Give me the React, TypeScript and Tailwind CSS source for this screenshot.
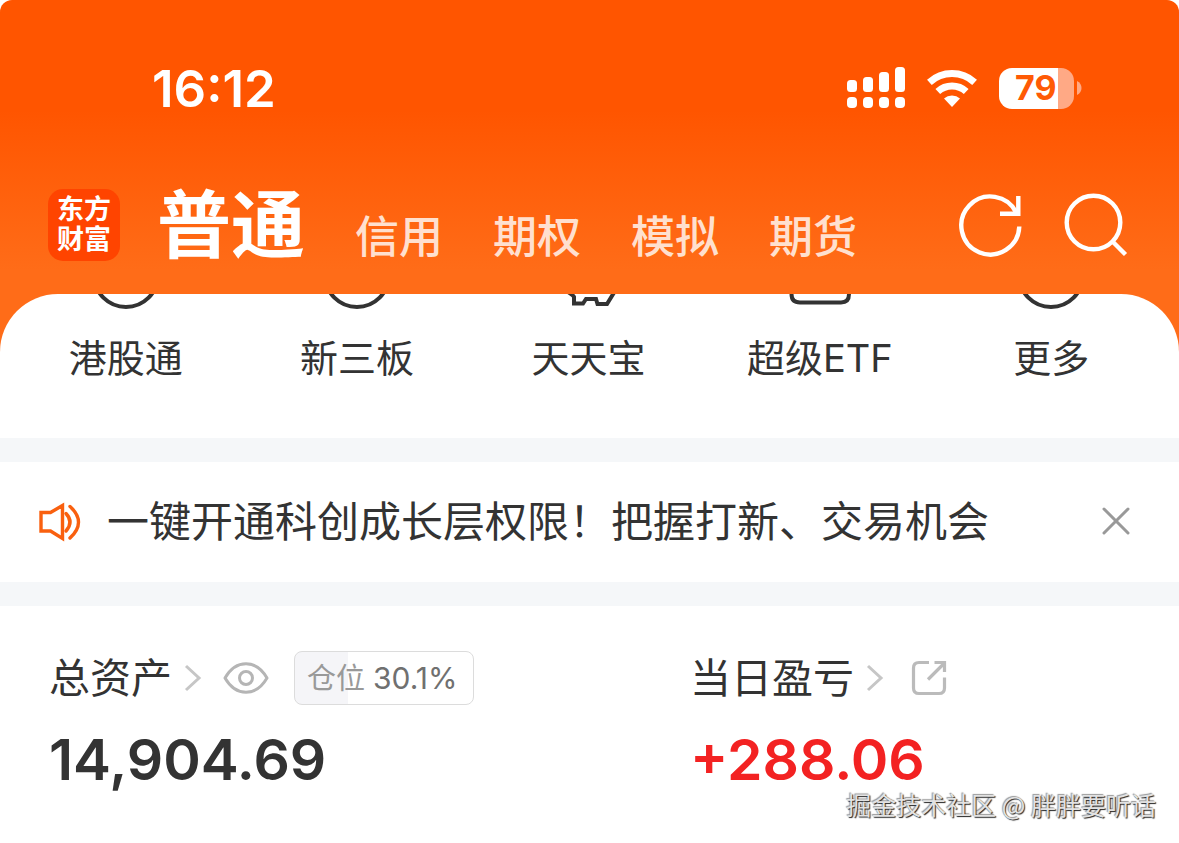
import React from "react";

const cjk = "font-['Inter','Noto_Sans_CJK_SC',sans-serif]";

const accounts = ["信用", "期权", "模拟", "期货"];

function SignalIcon() {
  const tops = [13, 10, 5, 0];
  const heights = [12, 15, 20, 25];
  return (
    <svg width="58" height="42" viewBox="0 0 58 42" fill="#fff" aria-hidden="true">
      {tops.map((top, i) => (
        <g key={top}>
          <rect x={i * 16} y={top} width="10" height={heights[i]} rx="3.5" />
          <rect x={i * 16} y="30" width="10" height="11" rx="4" />
        </g>
      ))}
    </svg>
  );
}

function WifiIcon() {
  return (
    <svg width="52" height="40" viewBox="0 0 52 40" fill="none" stroke="#fff" strokeWidth="7" aria-hidden="true">
      <path d="M3.4 14.3 A33.5 33.5 0 0 1 48.6 14.3" />
      <path d="M11.8 23.5 A21 21 0 0 1 40.2 23.5" />
      <path d="M26 39 L18 30.5 A12 12 0 0 1 34 30.5 Z" fill="#fff" stroke="none" />
    </svg>
  );
}

function Battery() {
  return (
    <div className="flex items-center gap-[3px]">
      <div className="flex h-[41px] w-[75px] items-center overflow-hidden rounded-[13px] bg-[linear-gradient(90deg,#fff_59px,#ffa985_59px)] pl-4 text-[34px] leading-none font-bold text-[#ff5a05]">
        79
      </div>
      <svg width="5" height="14" viewBox="0 0 5 14" fill="#ffa985" aria-hidden="true">
        <path d="M0 0 C6 3 6 11 0 14 Z" />
      </svg>
    </div>
  );
}

function RefreshIcon() {
  return (
    <svg width="64" height="64" viewBox="0 0 64 64" fill="none" stroke="#fff" strokeWidth="4.4" aria-hidden="true">
      <path d="M60.3 33.5 A29 29 0 1 1 57.5 20" />
      <path d="M41 20.800 H59.300 V3" />
    </svg>
  );
}

function SearchIcon() {
  return (
    <svg width="64" height="64" viewBox="0 0 64 64" fill="none" stroke="#fff" strokeWidth="4.4" aria-hidden="true">
      <circle cx="29.5" cy="29.5" r="26.8" />
      <path d="M48.5 48.5 L61.5 61.5" />
    </svg>
  );
}

const shortcuts = [
  { label: "港股通", shape: <circle cx="40" cy="-19" r="32" /> },
  { label: "新三板", shape: <circle cx="40" cy="-19" r="32" /> },
  { label: "天天宝", shape: <path d="M20 -2 Q25 1 26 3 V9.500 H35 L38 5 H48 L49.500 10 H59 L67 -3" /> },
  { label: "超级ETF", shape: <path d="M11.500 -8 V0 Q11.500 8.500 20 8.500 H61 Q69 8.500 69 0 V-8" /> },
  { label: "更多", shape: <circle cx="40" cy="-19" r="32" /> },
];

function Chevron() {
  return (
    <svg width="18" height="28" viewBox="0 0 18 28" fill="none" stroke="#c6c6c6" strokeWidth="3" aria-hidden="true">
      <path d="M2 2 L15 14 L2 26" />
    </svg>
  );
}

export default function App() {
  return (
    <main className={`relative min-h-screen bg-white text-[#333] ${cjk}`}>
      <div className="rounded-t-[12px] bg-[linear-gradient(180deg,#ff5500_0px,#ff5500_110px,#ff6c18_270px)]">
        <header className="h-[294px] pt-[60px] text-white">
          <div className="flex h-14 items-center justify-between pr-[97px] pl-[152px]">
            <span className="text-[51px] leading-none font-semibold">16:12</span>
            <div className="flex items-center gap-[21px]">
              <SignalIcon />
              <WifiIcon />
              <Battery />
            </div>
          </div>
          <div className="mt-[67px] flex items-center justify-between pr-[51px] pl-12">
            <div className="flex items-center">
              <a
                href="#home"
                className="flex size-[72px] flex-col items-center justify-center rounded-[15px] bg-[#ff4400] text-[27px] leading-[30px] font-bold"
              >
                <span>东方</span>
                <span>财富</span>
              </a>
              <nav className="ml-[37px] flex items-end gap-[50px]">
                <a href="#normal" aria-current="page" className="text-[74px] leading-[84px] font-bold">
                  普通
                </a>
                {accounts.map((name) => (
                  <a key={name} href={`#${name}`} className="text-[44px] leading-[60px] font-medium text-[#ffe0cf]">
                    {name}
                  </a>
                ))}
              </nav>
            </div>
            <div className="flex items-center gap-[41px]">
              <button type="button" aria-label="刷新">
                <RefreshIcon />
              </button>
              <button type="button" aria-label="搜索">
                <SearchIcon />
              </button>
            </div>
          </div>
        </header>

        <nav className="grid h-36 grid-cols-5 overflow-hidden rounded-t-[58px] bg-white pr-3 pl-[10px]">
          {shortcuts.map(({ label, shape }) => (
            <a key={label} href={`#${label}`} className="flex flex-col items-center gap-6 text-[38px] leading-[48px]">
              <svg width="80" height="16" viewBox="0 0 80 16" fill="none" stroke="#333" strokeWidth="4" aria-hidden="true">
                {shape}
              </svg>
              {label}
            </a>
          ))}
        </nav>
      </div>

      <div className="h-6 bg-[#f5f7f9]" />

      <section className="flex h-[120px] items-center pr-[48px] pl-[38px]">
        <svg width="44" height="40" viewBox="0 0 44 40" fill="none" stroke="#f9600f" strokeWidth="3.4" aria-hidden="true">
          <path d="M3 10.500 H12.500 L24.500 3.500 V36.500 L12.500 29 H3 Z" />
          <path d="M28 11.500 Q36 20 28 29" strokeLinecap="round" />
          <path d="M32 4.500 Q49 20 32 36" strokeLinecap="round" />
        </svg>
        <p className="ml-[25px] flex-1 text-[42px] leading-[56px] whitespace-nowrap">
          一键开通科创成长层权限！把握打新、交易机会
        </p>
        <button type="button" aria-label="关闭">
          <svg width="30" height="30" viewBox="0 0 30 30" fill="none" stroke="#999" strokeWidth="3" strokeLinecap="round" aria-hidden="true">
            <path d="M3 2 L27 26 M27 2 L3 26" />
          </svg>
        </button>
      </section>

      <div className="h-6 bg-[#f5f7f9]" />

      <section className="grid grid-cols-[643fr_536fr] pt-[42px] pb-12">
        <div className="pl-[49px]">
          <div className="flex h-[60px] items-center">
            <a href="#assets" className="flex items-center gap-3 text-[41px] leading-[60px]">
              总资产
              <Chevron />
            </a>
            <button type="button" aria-label="隐藏金额" className="ml-[21px]">
              <svg width="46" height="32" viewBox="0 0 46 32" fill="none" stroke="#b5b5b5" strokeWidth="3" aria-hidden="true">
                <path d="M2 16 C13 -3 33 -3 44 16 C33 35 13 35 2 16 Z" strokeLinejoin="round" />
                <circle cx="23" cy="16" r="6.500" />
              </svg>
            </button>
            <span className="ml-[25px] flex h-[54px] w-[180px] items-center gap-2 rounded-lg border border-[#dcdcdc] bg-[linear-gradient(90deg,#f5f5f8_30%,#fff_30%)] pl-3 text-[29px] leading-none whitespace-nowrap">
              <span className="text-[#999]">仓位</span>
              <span className="text-[30px] text-[#707070]">30.1%</span>
            </span>
          </div>
          <p className="mt-[14px] text-[57px] leading-[76px] font-semibold">14,904.69</p>
        </div>
        <div className="pl-[47px]">
          <div className="flex h-[60px] items-center">
            <a href="#profit" className="flex items-center gap-3 text-[41px] leading-[60px]">
              当日盈亏
              <Chevron />
            </a>
            <button type="button" aria-label="分享" className="ml-[27px]">
              <svg width="36" height="36" viewBox="0 0 36 36" fill="none" stroke="#bbb" strokeWidth="3.2" aria-hidden="true">
                <path d="M18 2.500 H8 Q2.500 2.500 2.500 8 V28 Q2.500 33.500 8 33.500 H28 Q33.500 33.500 33.500 28 V17.500" />
                <path d="M17 19.500 L33 3.500 M23.500 2.500 H33.500 V12" />
              </svg>
            </button>
          </div>
          <p className="mt-[14px] text-[57px] leading-[76px] font-semibold text-[#f32222]">+288.06</p>
        </div>
      </section>

      <p className="absolute top-[786px] right-[23px] font-['Noto_Sans_CJK_SC',sans-serif] text-[25px] leading-9 whitespace-nowrap text-[#e2e2e2] [text-shadow:1px_1px_1px_#222,-1px_-1px_1px_#999]">
        掘金技术社区 @ 胖胖要听话
      </p>
    </main>
  );
}
